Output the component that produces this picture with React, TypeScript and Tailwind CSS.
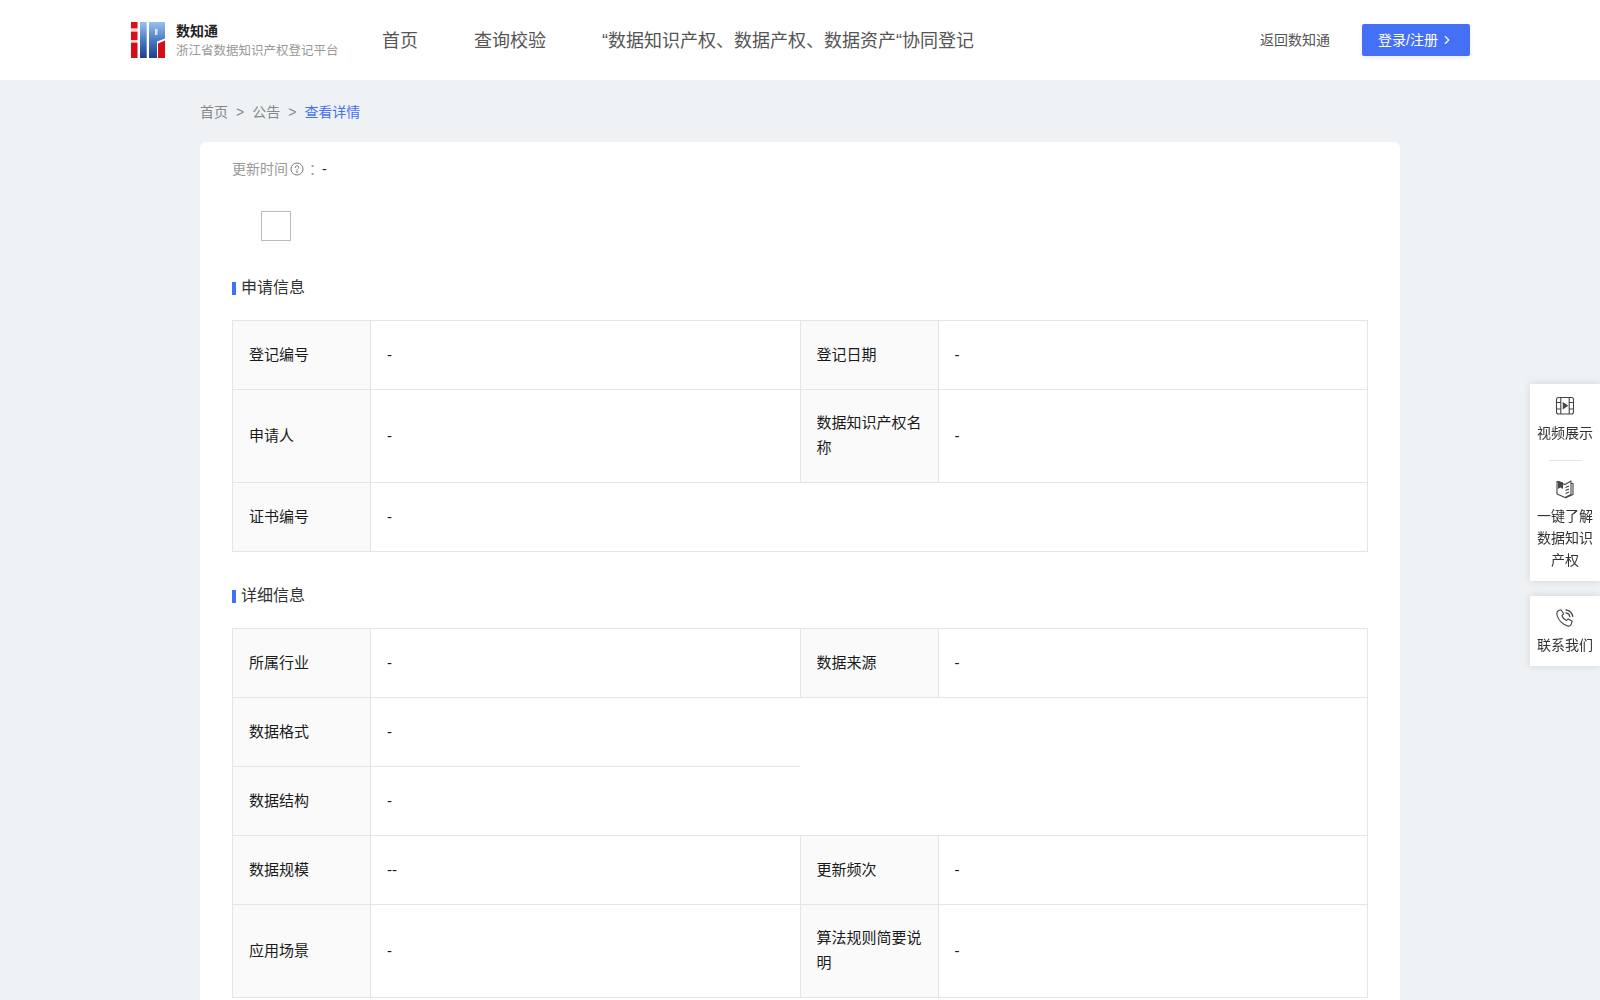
import { ChevronRight } from "lucide-react";

const SANS = "font-['Liberation_Sans','Noto_Sans_CJK_SC',sans-serif]";

function Logo() {
  return (
    <svg width="34" height="36" viewBox="0 0 34 36" className="shrink-0">
      <defs>
        <linearGradient id="blue" x1="0" y1="0" x2="0" y2="1">
          <stop offset="0" stopColor="#9cc0ee" />
          <stop offset="0.5" stopColor="#4a7cc4" />
          <stop offset="1" stopColor="#1f3c8e" />
        </linearGradient>
      </defs>
      <rect x="0" y="0" width="6.5" height="36" fill="#f6d6d6" />
      <rect x="0" y="0" width="6.5" height="6.3" fill="#dc0f18" />
      <rect x="0" y="9.7" width="6.5" height="8.3" fill="#dc0f18" />
      <rect x="0" y="20.7" width="6.5" height="15.3" fill="#d40d16" />
      <rect x="9" y="0" width="6.7" height="36" fill="url(#blue)" />
      <path d="M18 0H34V16.5L26 19.5V36H18Z" fill="url(#blue)" />
      <rect x="24" y="7" width="2.5" height="6" fill="#dbe8f8" />
      <path d="M27 21.5L34 18.5V36H27Z" fill="#d40d16" />
    </svg>
  );
}

function Cell({ label, value, span, open }: { label: string; value: string; span?: number; open?: boolean }) {
  return (
    <>
      <th className="w-[138px] border border-[#e5e5e5] bg-[#fafafa] px-4 pb-[12px] pt-[10px] text-left text-[15px] font-normal leading-[25px] text-[#1a1a1a]">
        {label}
      </th>
      <td
        colSpan={span}
        className={`border border-[#e5e5e5] px-4 pb-[12px] pt-[10px] text-[15px] leading-[25px] text-[#1a1a1a] ${open ? "border-r-0" : ""}`}
      >
        {value}
      </td>
    </>
  );
}

function SectionTitle({ children }: { children: string }) {
  return (
    <div className="flex items-center gap-[5px] text-base leading-6 text-[#333]">
      <span className="h-[13px] w-1 bg-[#4470f6]" />
      {children}
    </div>
  );
}

function ApplyTable() {
  return (
    <table className="mt-5 w-[1136px] table-fixed border-collapse">
      <tbody>
        <tr className="h-[69px]"><Cell label="登记编号" value="-" /><Cell label="登记日期" value="-" /></tr>
        <tr className="h-[93px]"><Cell label="申请人" value="-" /><Cell label="数据知识产权名称" value="-" /></tr>
        <tr className="h-[69px]"><Cell label="证书编号" value="-" span={3} /></tr>
      </tbody>
    </table>
  );
}

function DetailTable() {
  return (
    <table className="mt-5 w-[1136px] table-fixed border-collapse">
      <tbody>
        <tr className="h-[69px]"><Cell label="所属行业" value="-" /><Cell label="数据来源" value="-" /></tr>
        <tr className="h-[69px]">
          <Cell label="数据格式" value="-" open />
          <td colSpan={2} rowSpan={2} className="border border-l-0 border-[#e5e5e5]" />
        </tr>
        <tr className="h-[69px]"><Cell label="数据结构" value="-" open /></tr>
        <tr className="h-[69px]"><Cell label="数据规模" value="--" /><Cell label="更新频次" value="-" /></tr>
        <tr className="h-[93px]"><Cell label="应用场景" value="-" /><Cell label="算法规则简要说明" value="-" /></tr>
      </tbody>
    </table>
  );
}

function FilmIcon() {
  return (
    <svg width="20" height="20" viewBox="0 0 20 20" fill="none" stroke="#444" strokeWidth="1.1">
      <rect x="1.5" y="1.5" width="17" height="16.5" rx="2" />
      <path d="M5.8 1.5V18M14.2 1.5V18M1.5 6.5H5.8M1.5 13H5.8M14.2 6.5H18.5M14.2 13H18.5" />
      <path d="M8.3 7L12.3 9.7L8.3 12.4Z" fill="#444" />
    </svg>
  );
}

function BookIcon() {
  return (
    <svg width="20" height="20" viewBox="0 0 20 20" fill="none" stroke="#444" strokeWidth="1.1">
      <path d="M2 2.5L10 5.5L16 2V15.5L10 18.5L2 15Z" strokeLinejoin="round" />
      <path d="M16 4.5H18V15.5L10 19" strokeLinejoin="round" />
      <path d="M3.5 2.5L7.5 4V9L5.5 7.8L3.5 9Z" fill="#444" />
      <path d="M10.5 8.5L14 7M10.5 11.5L14 10M10.5 14.5L14 13" />
    </svg>
  );
}

function PhoneIcon() {
  return (
    <svg width="20" height="20" viewBox="0 0 20 20" fill="none" stroke="#444" strokeWidth="1.1">
      <path d="M3.6 2.6L6 1.8L8.6 5.8L7 7.6C7.6 9.8 9.4 11.6 11.6 12.4L13.2 10.9L17.2 13.2L16.4 15.8C15.8 17.6 14.2 18.4 12.6 17.9C7.6 16.6 3.2 12.2 2 7C1.6 5.2 2.2 3.4 3.6 2.6Z" strokeLinejoin="round" />
      <path d="M11 1.8C14.6 2.4 17 4.8 17.8 8.4M11 4.8C13 5.1 14.5 6.6 14.9 8.6" strokeLinecap="round" strokeWidth="1.3" />
    </svg>
  );
}

function SideTools() {
  return (
    <div className="fixed right-0 top-[384px] z-10 flex w-[70px] flex-col gap-[15px] text-center text-sm leading-[22px] text-[#333]">
      <div className="bg-white pb-[10px] pt-[12px] shadow-[0_0_8px_rgba(0,0,0,0.12)]">
        <div className="flex justify-center"><FilmIcon /></div>
        <div className="mt-[6px]">视频展示</div>
        <div className="mx-auto mb-[18px] mt-[16px] h-px w-[33px] bg-[#e5e5e5]" />
        <div className="flex justify-center"><BookIcon /></div>
        <div className="mt-[6px] px-[7px]">一键了解数据知识产权</div>
      </div>
      <div className="bg-white pb-[10px] pt-[12px] shadow-[0_0_8px_rgba(0,0,0,0.12)]">
        <div className="flex justify-center"><PhoneIcon /></div>
        <div className="mt-[6px]">联系我们</div>
      </div>
    </div>
  );
}

export default function App() {
  return (
    <div className={`h-[1000px] overflow-hidden bg-[#eef2f5] ${SANS}`}>
      <header className="flex h-20 items-center bg-white pl-[131px] pr-[130px]">
        <Logo />
        <div className="ml-[11px] w-[172px] pt-px">
          <div className="text-sm font-bold leading-5 text-[#222]">数知通</div>
          <div className="mt-px text-[12.5px] leading-[18px] text-[#999]">浙江省数据知识产权登记平台</div>
        </div>
        <nav className="ml-[34px] mt-[2px] flex gap-[56px] text-lg text-[#555]">
          <span>首页</span>
          <span>查询校验</span>
          <span>“数据知识产权、数据产权、数据资产“协同登记</span>
        </nav>
        <span className="ml-auto text-sm text-[#555]">返回数知通</span>
        <button className="ml-8 flex h-8 w-[108px] items-center justify-center gap-0.5 rounded-[2px] bg-[#4470f6] text-sm text-white shadow-[0_2px_4px_rgba(0,0,0,0.08)]">
          登录/注册
          <ChevronRight size={14} />
        </button>
      </header>

      <main className="mx-auto w-[1200px]">
        <div className="flex h-[62px] items-center gap-2 pt-px text-sm text-[#888]">
          <span>首页</span>
          <span>&gt;</span>
          <span>公告</span>
          <span>&gt;</span>
          <span className="text-[#4470f6]">查看详情</span>
        </div>

        <section className="rounded-t-md bg-white px-8 pb-10">
          <div className="flex items-center pt-4 text-sm leading-[22px] text-[#999]">
            更新时间
            <svg width="14" height="14" viewBox="0 0 14 14" fill="none" stroke="#777" className="ml-[2px]">
              <circle cx="7" cy="7" r="6" />
              <path d="M5.2 5.6C5.2 4.5 6 3.9 7 3.9C8 3.9 8.8 4.5 8.8 5.4C8.8 6.7 7 6.6 7 8.2" strokeLinecap="round" />
              <circle cx="7" cy="10" r="0.4" fill="#777" />
            </svg>
            <span className="ml-[5px] w-[13px]">：</span>
            <span className="text-[#222]">-</span>
          </div>
          <div className="ml-[29px] mt-[31px] h-[30px] w-[30px] border border-[#bbb]" />
          <div className="mt-[35px]"><SectionTitle>申请信息</SectionTitle></div>
          <ApplyTable />
          <div className="mt-8"><SectionTitle>详细信息</SectionTitle></div>
          <DetailTable />
        </section>
      </main>

      <SideTools />
    </div>
  );
}
